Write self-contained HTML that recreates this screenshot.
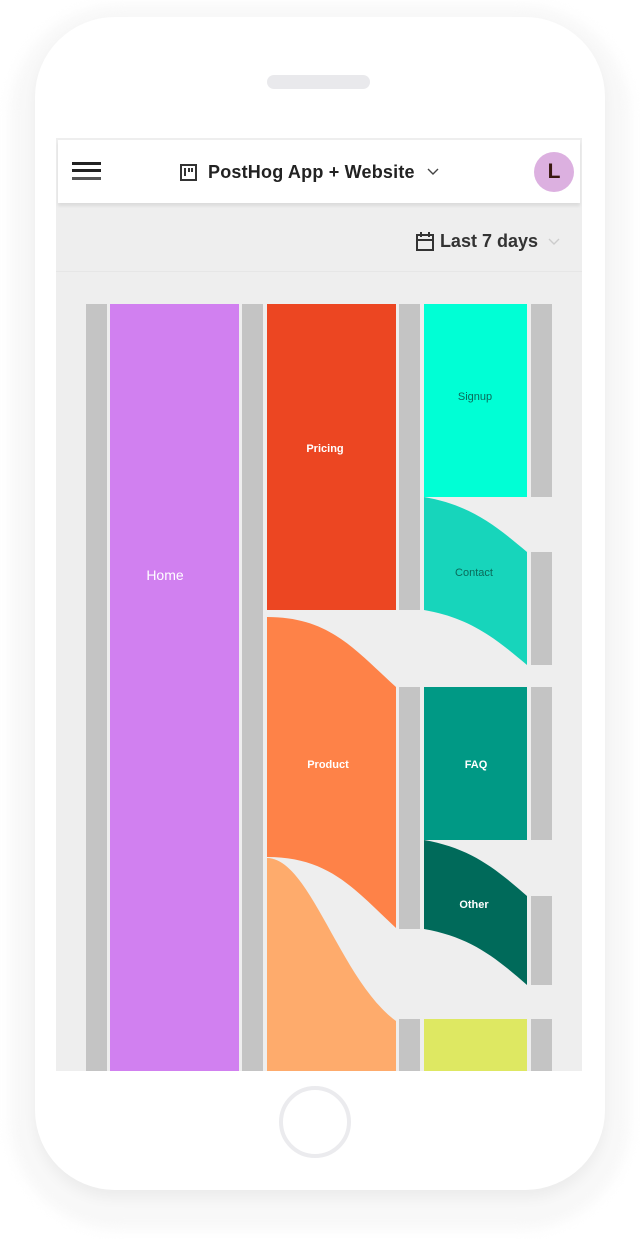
<!DOCTYPE html>
<html><head><meta charset="utf-8"><style>
html,body{margin:0;padding:0;background:#fff;}
body{width:640px;height:1239px;position:relative;overflow:hidden;font-family:"Liberation Sans",sans-serif;}
.shadow{position:absolute;left:10px;top:5px;width:620px;height:1225px;border-radius:110px;background:#f8f8f8;filter:blur(6px);}
.phone{position:absolute;left:35px;top:17px;width:570px;height:1173px;border-radius:80px;background:#fff;box-shadow:0 8px 14px rgba(0,0,0,0.05);}
.speaker{position:absolute;left:267px;top:75px;width:103px;height:14px;border-radius:7px;background:#e9e9ec;}
.home{position:absolute;left:279px;top:1086px;width:72px;height:72px;border:4px solid #ebebee;border-radius:50%;box-sizing:border-box;}
.screen{position:absolute;left:56px;top:138px;width:526px;height:933px;background:#eee;overflow:hidden;}
.header{position:absolute;left:2px;top:2px;width:522px;height:63px;background:#fff;box-shadow:0 3px 3px rgba(0,0,0,0.08);}
.title{position:absolute;left:150px;top:22px;font-size:18px;font-weight:bold;color:#222;letter-spacing:0.2px;}
.avatar{position:absolute;left:476px;top:12px;width:40px;height:40px;border-radius:50%;background:#dcb0e0;color:#3a1810;font-size:21px;font-weight:bold;text-align:center;line-height:40px;}
.date{position:absolute;right:20px;top:93px;font-size:18px;font-weight:bold;color:#333;}
.sep{position:absolute;left:0;top:133px;width:526px;height:1px;background:#e6e6e6;}
</style></head><body>
<div class="shadow"></div>
<div class="phone"></div>
<div class="speaker"></div>
<div class="home"></div>
<div class="screen">
 <div class="header">
  <svg style="position:absolute;left:14px;top:22px" width="30" height="20"><rect x="0" y="0" width="29" height="3" fill="#222"/><rect x="0" y="7" width="29" height="3" fill="#222"/><rect x="0" y="15" width="29" height="3" fill="#555"/></svg>
  <svg style="position:absolute;left:122px;top:24px" width="18" height="18"><rect x="1" y="1" width="15" height="15" fill="none" stroke="#333" stroke-width="2"/><rect x="4" y="4" width="2" height="8" fill="#333"/><rect x="8" y="4" width="2" height="4" fill="#333"/><rect x="11" y="4" width="2" height="4" fill="#333"/></svg>
  <div class="title">PostHog App + Website</div>
  <svg style="position:absolute;left:369px;top:28px" width="12" height="8"><path d="M1 1 L6 6 L11 1" fill="none" stroke="#444" stroke-width="1.4"/></svg>
  <div class="avatar">L</div>
 </div>
 <svg style="position:absolute;left:360px;top:94px" width="18" height="19"><rect x="1" y="3" width="16" height="15" fill="none" stroke="#333" stroke-width="2"/><rect x="1" y="7" width="16" height="2" fill="#333"/><rect x="4" y="0" width="2" height="5" fill="#333"/><rect x="12" y="0" width="2" height="5" fill="#333"/></svg>
 <div class="date" style="right:44px">Last 7 days</div>
 <svg style="position:absolute;left:492px;top:100px" width="12" height="8"><path d="M1 1 L6 6 L11 1" fill="none" stroke="#ccc" stroke-width="1.4"/></svg>
 <div class="sep"></div>
</div>
<svg style="position:absolute;left:0;top:0" width="640" height="1239">
 <g fill="#c4c4c4">
  <rect x="86" y="304" width="21" height="767"/>
  <rect x="242" y="304" width="21" height="767"/>
  <rect x="399" y="304" width="21" height="306"/>
  <rect x="399" y="687" width="21" height="242"/>
  <rect x="399" y="1019" width="21" height="52"/>
  <rect x="531" y="304" width="21" height="193"/>
  <rect x="531" y="552" width="21" height="113"/>
  <rect x="531" y="687" width="21" height="153"/>
  <rect x="531" y="896" width="21" height="89"/>
  <rect x="531" y="1019" width="21" height="52"/>
 </g>
 <rect x="110" y="304" width="129" height="767" fill="#d180f0"/>
 <rect x="267" y="304" width="129" height="306" fill="#ec4622"/>
 <path d="M267 617 C330 617 355 650 396 687 L396 928 C355 890 330 857 267 857 Z" fill="#fe8248"/>
 <path d="M267 858 C310 858 340 980 396 1021 L396 1071 L267 1071 Z" fill="#feab6c"/>
 <rect x="424" y="304" width="103" height="193" fill="#00ffd5"/>
 <path d="M424 497 C470 505 495 525 527 552 L527 665 C495 638 470 618 424 610 Z" fill="#17d5bb"/>
 <rect x="424" y="687" width="103" height="153" fill="#009985"/>
 <path d="M424 840 C470 848 495 868 527 896 L527 985 C495 957 470 937 424 929 Z" fill="#006a5a"/>
 <rect x="424" y="1019" width="103" height="52" fill="#dee862"/>
 <g font-family="Liberation Sans, sans-serif" text-anchor="middle" fill="#fff">
  <text x="165" y="580" font-size="14">Home</text>
  <text x="325" y="452" font-size="11" font-weight="bold">Pricing</text>
  <text x="328" y="768" font-size="11" font-weight="bold">Product</text>
  <text x="475" y="400" font-size="11" fill="#0a6a5a">Signup</text>
  <text x="474" y="576" font-size="11" fill="#0a6a5a">Contact</text>
  <text x="476" y="768" font-size="11" font-weight="bold">FAQ</text>
  <text x="474" y="908" font-size="11" font-weight="bold">Other</text>
 </g>
</svg>
</body></html>
